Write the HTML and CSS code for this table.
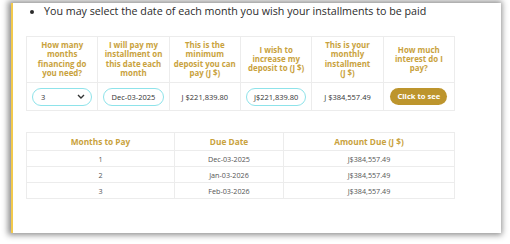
FILE: index.html
```html
<!DOCTYPE html>
<html>
<head>
<meta charset="utf-8">
<link rel="stylesheet" href="styles.css">
</head>
<body>
<div class="card">
  <ul class="notes">
    <li>You may select the date of each month you wish your installments to be paid</li>
  </ul>
  <table class="calc">
    <thead>
      <tr>
        <th>How many<br>months<br>financing do<br>you need?</th>
        <th>I will pay my<br>installment on<br>this date each<br>month</th>
        <th>This is the<br>minimum<br>deposit you can<br>pay (J $)</th>
        <th>I wish to<br>increase my<br>deposit to (J $)</th>
        <th>This is your<br>monthly<br>installment<br>(J $)</th>
        <th>How much<br>interest do I<br>pay?</th>
      </tr>
    </thead>
    <tbody>
      <tr>
        <td><div class="pill select"><span>3</span><svg width="8" height="5" viewBox="0 0 8 5"><path d="M1 1l3 3 3-3" fill="none" stroke="#333" stroke-width="1.4"/></svg></div></td>
        <td><div class="pill center">Dec-03-2025</div></td>
        <td>J $221,839.80</td>
        <td><div class="pill center">J$221,839.80</div></td>
        <td>J $384,557.49</td>
        <td><span class="btn">Click to see</span></td>
      </tr>
    </tbody>
  </table>
  <table class="sched">
    <thead>
      <tr><th class="c1">Months to Pay</th><th class="c2">Due Date</th><th>Amount Due (J $)</th></tr>
    </thead>
    <tbody>
      <tr><td>1</td><td>Dec-03-2025</td><td>J$384,557.49</td></tr>
      <tr><td>2</td><td>Jan-03-2026</td><td>J$384,557.49</td></tr>
      <tr><td>3</td><td>Feb-03-2026</td><td>J$384,557.49</td></tr>
    </tbody>
  </table>
</div>
</body>
</html>
```
FILE: styles.css
```css
html, body {
  margin: 0;
  padding: 0;
  background: #fff;
  width: 510px;
  height: 244px;
  overflow: hidden;
}
body {
  font-family: "Open Sans", "Liberation Sans", sans-serif;
  color: #333;
  padding-top: 3px;
  box-sizing: border-box;
}
.card {
  margin-left: 11px;
  width: 490px;
  height: 230px;
  background: #fff;
  border-left: 2px solid #f2c94c;
  box-shadow: -1px 0 6px 2px rgba(0,0,0,0.45);
  padding: 0 0 0 13px;
  box-sizing: border-box;
}
.notes {
  margin: 0;
  padding: 1px 0 0 18px;
  font-size: 10.7px;
  line-height: 15px;
  color: #2b2b2b;
}
table {
  border-collapse: collapse;
  width: 429px;
}
.calc {
  margin-top: 17px;
  table-layout: fixed;
}
.calc th, .calc td {
  border: 1px solid #ececec;
  text-align: center;
  vertical-align: middle;
}
.calc th {
  color: #c9a23d;
  font-size: 7.9px;
  font-weight: 700;
  line-height: 9.3px;
  padding: 4px 1px 4px;
  height: 37px;
  white-space: nowrap;
}
.calc td {
  font-size: 7.5px;
  height: 27px;
  padding: 0 5px;
  color: #333;
}
.pill {
  border: 1px solid #8ee3ea;
  border-radius: 9px;
  height: 16px;
  line-height: 16px;
  font-size: 7.5px;
  color: #333;
}
.select {
  display: flex;
  justify-content: space-between;
  align-items: center;
  padding: 0 6px 0 8px;
}
.center { text-align: center; }
.btn {
  display: inline-block;
  background: #bd952d;
  color: #fff;
  font-weight: 700;
  font-size: 7.6px;
  border-radius: 9px;
  padding: 0 7px;
  line-height: 17px;
}
.sched {
  margin-top: 21px;
}
.sched th, .sched td {
  border: 1px solid #ececec;
  text-align: center;
}
.sched th {
  color: #c9a23d;
  font-weight: 700;
  font-size: 8.3px;
  height: 17px;
  padding: 0;
}
.sched td {
  font-size: 7.2px;
  color: #555;
  height: 15px;
  padding: 0;
}
.c1 { width: 147px; }
.c2 { width: 108px; }
```
